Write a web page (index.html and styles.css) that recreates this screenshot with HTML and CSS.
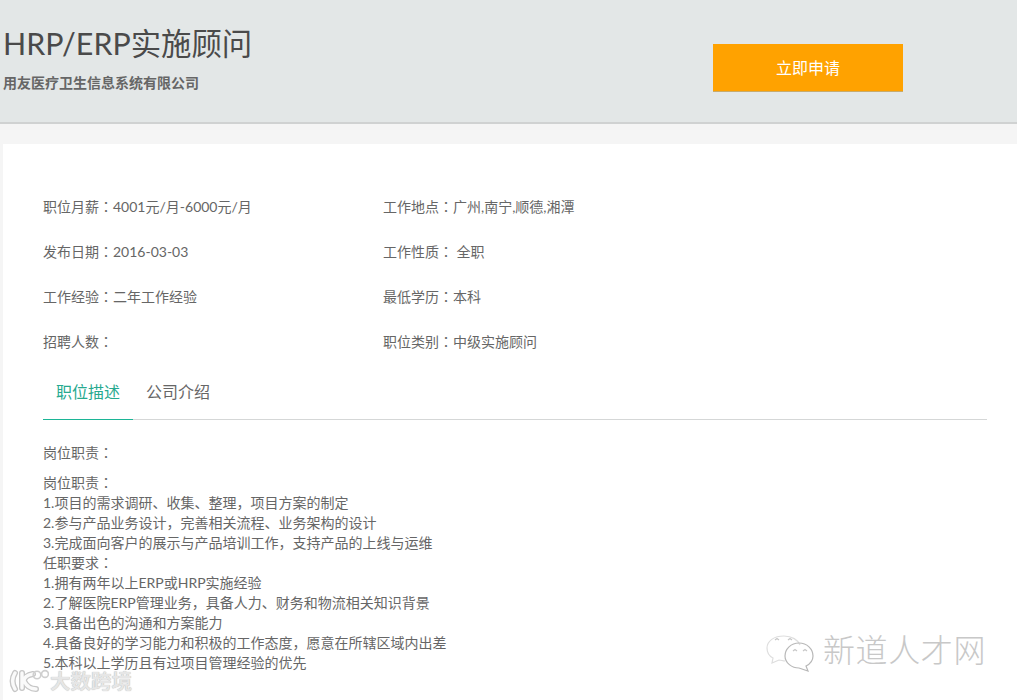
FILE: index.html
```html
<!DOCTYPE html>
<html lang="zh-CN">
<head>
<meta charset="utf-8">
<title>HRP/ERP实施顾问</title>
<link rel="stylesheet" href="styles.css">
</head>
<body>
<header class="hero">
  <div class="hero-text">
    <h1 class="job-title">HRP/ERP实施顾问</h1>
    <p class="company">用友医疗卫生信息系统有限公司</p>
  </div>
  <a class="apply" href="#">立即申请</a>
</header>
<main class="card">
  <dl class="facts">
    <div class="fact">职位月薪<span class="colon" lang="zh-TW">：</span>4001元/月-6000元/月</div>
    <div class="fact">工作地点<span class="colon" lang="zh-TW">：</span>广州,南宁,顺德,湘潭</div>
    <div class="fact">发布日期<span class="colon" lang="zh-TW">：</span>2016-03-03</div>
    <div class="fact">工作性质<span class="colon" lang="zh-TW">：</span> 全职</div>
    <div class="fact">工作经验<span class="colon" lang="zh-TW">：</span>二年工作经验</div>
    <div class="fact">最低学历<span class="colon" lang="zh-TW">：</span>本科</div>
    <div class="fact">招聘人数<span class="colon" lang="zh-TW">：</span></div>
    <div class="fact">职位类别<span class="colon" lang="zh-TW">：</span>中级实施顾问</div>
  </dl>
  <nav class="tabs">
    <a class="tab tab-active" href="#">职位描述</a>
    <a class="tab" href="#">公司介绍</a>
  </nav>
  <section class="desc">
    <p class="desc-head">岗位职责<span class="colon" lang="zh-TW">：</span></p>
    <p class="desc-body">岗位职责<span class="colon" lang="zh-TW">：</span><br>1.项目的需求调研、收集、整理，项目方案的制定<br>2.参与产品业务设计，完善相关流程、业务架构的设计<br>3.完成面向客户的展示与产品培训工作，支持产品的上线与运维<br>任职要求<span class="colon" lang="zh-TW">：</span><br>1.拥有两年以上ERP或HRP实施经验<br>2.了解医院ERP管理业务，具备人力、财务和物流相关知识背景<br>3.具备出色的沟通和方案能力<br>4.具备良好的学习能力和积极的工作态度，愿意在所辖区域内出差<br>5.本科以上学历且有过项目管理经验的优先</p>
  </section>
</main>
<div class="mark-left">
  <svg class="mark-left-logo" width="40" height="24" viewBox="0 0 40 24" fill="none" aria-hidden="true">
    <g stroke="#c6c6c6" stroke-width="6" stroke-linecap="round" stroke-linejoin="round">
      <path d="M6 4 C3 9 3 15 6 20"/>
      <path d="M13 4 L13 19 M24 5 C18 6 15 9 15 12 C17 16 21 20 27 20"/>
    </g>
    <g stroke="#fafafa" stroke-width="3.4" stroke-linecap="round" stroke-linejoin="round">
      <path d="M6 4 C3 9 3 15 6 20"/>
      <path d="M13 4 L13 19 M24 5 C18 6 15 9 15 12 C17 16 21 20 27 20"/>
    </g>
    <circle cx="28" cy="6" r="3.8" stroke="#cfcfcf" stroke-width="1.6"/>
    <circle cx="36" cy="5" r="3.4" stroke="#cfcfcf" stroke-width="1.6"/>
  </svg>
  <span class="mark-left-text">大数跨境</span>
</div>
<div class="mark-right">
  <svg class="mark-right-logo" width="50" height="40" viewBox="0 0 50 40" fill="none" stroke-width="1.2" aria-hidden="true">
    <path stroke="#dedede" d="M18 4 C8 4 1 9 1 16 C1 20 3 24 7 26 L6 31 L13 28 C15 28 17 29 19 29"/>
    <path stroke="#dedede" d="M18 4 C26 4 32 8 34 13"/>
    <path stroke="#b8b8b8" d="M33 11 C25 11 19 17 19 24 C19 31 26 36 33 36 L42 39 L40 34 C44 32 47 28 47 24 C47 17 41 11 33 11 Z"/>
    <path stroke="#c8c8c8" d="M9 8 L11 6.5 L13 8 M22 8 L24 6.5 L26 8 M27 19 L29 17.5 L31 19 M37 19 L39 17.5 L41 19"/>
  </svg>
  <span class="mark-right-text">新道人才网</span>
</div>
</body>
</html>
```
FILE: styles.css
```css
* { box-sizing: border-box; }
html, body { margin: 0; padding: 0; }
body {
  position: relative;
  height: 700px;
  overflow: hidden;
  background: #f5f5f5;
  color: #666;
  font-family: "Lato", "Noto Sans CJK SC", sans-serif;
  font-size: 14px;
}
.hero {
  display: flex;
  height: 124px;
  padding: 25px 0 0 3px;
  background: #e3e7e7;
  border-bottom: 2px solid #d0d2d2;
}
.hero-text { width: 710px; }
.job-title {
  margin: 0;
  font-size: 30.4px;
  line-height: 36px;
  font-weight: 400;
  color: #4a4a4a;
}
.company {
  margin: 12px 0 0;
  font-size: 14px;
  line-height: 20px;
  font-weight: 700;
  color: #666;
}
.apply {
  width: 190px;
  height: 48px;
  margin-top: 19px;
  background: #ffa200;
  border-bottom: 1px solid #c8ab6c;
  color: #fff;
  font-size: 16px;
  line-height: 48px;
  text-align: center;
  text-decoration: none;
}
.card {
  height: 556px;
  margin: 20px 0 0 3px;
  padding: 40px 30px 0 40px;
  background: #fff;
}
.facts {
  display: grid;
  grid-template-columns: 340px 1fr;
  grid-auto-rows: 45px;
  margin: 0;
}
.fact { line-height: 45px; }
.colon { font-family: "Noto Sans CJK TC", sans-serif; line-height: 0; }
.tabs {
  display: flex;
  height: 56px;
  border-bottom: 1px solid #d5d7d7;
}
.tab {
  height: 56px;
  padding: 0 13px;
  font-size: 16px;
  line-height: 56px;
  color: #666;
  text-decoration: none;
}
.tab-active {
  color: #26a98f;
  border-bottom: 1px solid #1cb596;
}
.desc { padding-top: 23px; line-height: 20px; }
.desc p { margin: 0; }
.desc-head { margin-bottom: 10px !important; }
.mark-left {
  position: absolute;
  left: 9px;
  top: 669px;
  display: flex;
  align-items: center;
  gap: 1px;
}
.mark-left-text {
  font-size: 20.5px;
  line-height: 16px;
  font-weight: 700;
  color: #e6e6e6;
  text-shadow: 0 0 1px #a8a8a8;
}
.mark-right {
  position: absolute;
  left: 766px;
  top: 632px;
  display: flex;
  align-items: flex-start;
  gap: 7px;
}
.mark-right-text {
  font-size: 32px;
  line-height: 36px;
  font-weight: 300;
  color: #c8c8c8;
  letter-spacing: 0.6px;
}
```
